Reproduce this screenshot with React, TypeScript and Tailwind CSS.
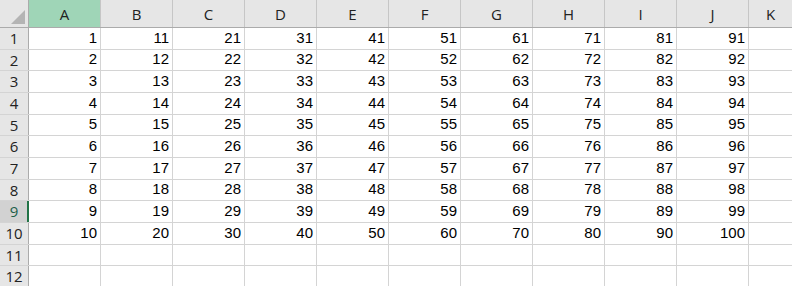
import React from "react";

const cols = ["A", "B", "C", "D", "E", "F", "G", "H", "I", "J"];
const rows = Array.from({ length: 12 }, (_, i) => i + 1);

export default function App() {
  return (
    <div className="w-[792px] h-[286px] overflow-hidden bg-white" style={{ fontFamily: "'Liberation Sans', Arial, sans-serif" }}>
      {/* header row */}
      <div className="flex h-[28px] bg-[#e6e6e6] border-b border-[#ababab]">
        <div className="w-[29px] shrink-0 border-r border-[#ababab] relative">
          <svg className="absolute left-[11px] top-[10px]" width="15" height="15" viewBox="0 0 15 15">
            <polygon points="14,0 14,14 0,14" fill="#b4b4b4" />
          </svg>
        </div>
        {cols.map((c, i) => (
          <div
            key={c}
            className={`w-[72px] shrink-0 flex items-center justify-center border-r border-[#c6c6c6] text-[15px] text-[#222] pt-[1px] ${i === 0 ? "bg-[#9fd5b7]" : ""}`}
            style={{ fontFamily: "'Open Sans', 'Noto Sans', sans-serif" }}
          >
            {c}
          </div>
        ))}
        <div
          className="flex-1 flex items-center justify-center text-[15px] text-[#222] pt-[1px]"
          style={{ fontFamily: "'Open Sans', 'Noto Sans', sans-serif" }}
        >
          K
        </div>
      </div>
      {rows.map((r) => (
        <div key={r} className="flex h-[21.67px] border-b border-[#d4d4d4]">
          <div
            className={`w-[29px] shrink-0 flex items-center justify-center text-[15px] ${
              r === 9
                ? "bg-[#d2d2d2] border-r-2 border-[#217346] text-[#1e5f4a] pl-[1px]"
                : "bg-[#e6e6e6] border-r border-[#ababab] text-[#222]"
            }`}
            style={{ fontFamily: "'Open Sans', 'Noto Sans', sans-serif" }}
          >
            {r}
          </div>
          {cols.map((c, i) => (
            <div
              key={c}
              className="w-[72px] shrink-0 flex items-end justify-end pr-[3px] pb-[1px] border-r border-[#d4d4d4] text-[15px] text-black leading-[20px]"
            >
              {r <= 10 ? i * 10 + r : ""}
            </div>
          ))}
          <div className="flex-1" />
        </div>
      ))}
    </div>
  );
}
